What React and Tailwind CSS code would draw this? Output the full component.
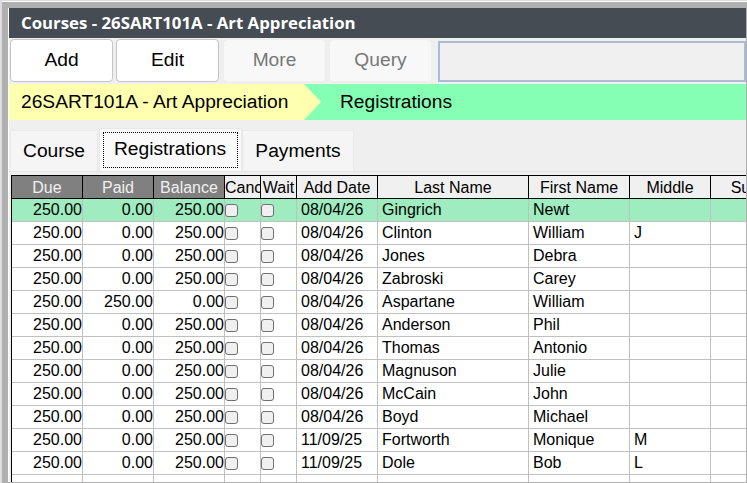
const rows = [
  ["250.00", "0.00", "250.00", "08/04/26", "Gingrich", "Newt", ""],
  ["250.00", "0.00", "250.00", "08/04/26", "Clinton", "William", "J"],
  ["250.00", "0.00", "250.00", "08/04/26", "Jones", "Debra", ""],
  ["250.00", "0.00", "250.00", "08/04/26", "Zabroski", "Carey", ""],
  ["250.00", "250.00", "0.00", "08/04/26", "Aspartane", "William", ""],
  ["250.00", "0.00", "250.00", "08/04/26", "Anderson", "Phil", ""],
  ["250.00", "0.00", "250.00", "08/04/26", "Thomas", "Antonio", ""],
  ["250.00", "0.00", "250.00", "08/04/26", "Magnuson", "Julie", ""],
  ["250.00", "0.00", "250.00", "08/04/26", "McCain", "John", ""],
  ["250.00", "0.00", "250.00", "08/04/26", "Boyd", "Michael", ""],
  ["250.00", "0.00", "250.00", "11/09/25", "Fortworth", "Monique", "M"],
  ["250.00", "0.00", "250.00", "11/09/25", "Dole", "Bob", "L"],
  ["", "", "", "", "", "", ""],
];

const darkHead = "h-[24px] border-r border-b border-t border-black bg-[#808080] p-0 pt-px text-center font-normal leading-none text-[#f0f0f0]";
const lightHead = "h-[24px] border-r border-b border-t border-black bg-[#f0f0f0] p-0 pt-px text-center font-normal leading-none text-black";
const cell = "h-[23px] border-r border-b border-[#c0c0c0] p-0 leading-none whitespace-nowrap overflow-hidden";

function ActionButton({ label, disabled }) {
  return (
    <button
      className={
        disabled
          ? "h-[43px] w-[103px] rounded border border-[#eeeeee] bg-[#f8f8f8] text-[19.2px] text-[#777777]"
          : "h-[43px] w-[103px] rounded border border-[#c4c4cc] bg-white text-[19.2px] text-black"
      }
    >
      {label}
    </button>
  );
}

function Box() {
  return (
    <input
      type="checkbox"
      readOnly
      checked={false}
      className="m-0 block h-[13px] w-[13px] appearance-none rounded-[3px] border border-[#707070] bg-[#f0f0f0]"
    />
  );
}

export default function App() {
  return (
    <div
      className="h-[483px] w-[747px] overflow-hidden border-l-2 border-t border-[#dddddd] bg-[#efefef]"
      style={{ fontFamily: '"Liberation Sans", Arial, sans-serif' }}
    >
      <div className="h-full border-t border-white">
        <div className="h-full overflow-hidden border-l-[6px] border-r border-t-[6px] border-b border-[#b0b0b0]">
          <div className="h-full border-l border-white">
            <div
              className="flex h-[30px] items-center bg-[#454c54] pl-3 text-[16.8px] font-bold text-white"
              style={{ fontFamily: '"Open Sans", sans-serif' }}
            >
              Courses - 26SART101A - Art Appreciation
            </div>

            <div className="mt-px flex pl-px">
              <ActionButton label="Add" />
              <div className="w-[3px]" />
              <ActionButton label="Edit" />
              <div className="w-[4px]" />
              <ActionButton label="More" disabled />
              <div className="w-[3px]" />
              <ActionButton label="Query" disabled />
              <div className="mt-[2px] ml-[6px] h-[41px] flex-1 border-2 border-[#a9bcd4] bg-[#f0f0f0]" />
            </div>

            <div className="relative mt-[2px] flex h-[36px] items-center bg-[#84ffb4] text-[19.2px] text-black">
              <div className="flex h-full w-[295px] items-center bg-[#ffffb0] pl-3">26SART101A - Art Appreciation</div>
              <svg className="h-[36px] w-[17px]" viewBox="0 0 17 36">
                <path d="M0 0 L17 18 L0 36 Z" fill="#ffffb0" />
              </svg>
              <span className="ml-[19px]">Registrations</span>
            </div>

            <div className="mt-[8px] flex h-[44px] items-end border-b border-[#e4e4e4] pl-px text-[19.2px] text-black">
              <div className="flex h-[41px] w-[88px] items-center justify-center border border-b-0 border-[#eaeaea] bg-[#f5f5f5]">
                Course
              </div>
              <div className="ml-px flex h-[43px] w-[143px] items-center justify-center border border-b-0 border-[#e8e8e8] bg-[#fafafa] p-[3px]">
                <span className="flex h-full w-full items-center justify-center border border-dotted border-black pb-[1px] pr-px">
                  Registrations
                </span>
              </div>
              <div className="flex h-[41px] w-[112px] items-center justify-center border border-b-0 border-[#eaeaea] bg-[#f5f5f5]">
                Payments
              </div>
            </div>

            <div className="mt-[3px] ml-[2px] overflow-hidden">
              <table className="w-[780px] table-fixed border-separate border-spacing-0 border-l border-black bg-white text-[16px] text-black">
                <colgroup>
                  <col className="w-[71px]" />
                  <col className="w-[71px]" />
                  <col className="w-[71px]" />
                  <col className="w-[36px]" />
                  <col className="w-[36px]" />
                  <col className="w-[81px]" />
                  <col className="w-[151px]" />
                  <col className="w-[101px]" />
                  <col className="w-[81px]" />
                  <col className="w-[80px]" />
                </colgroup>
                <thead>
                  <tr>
                    <th className={darkHead}>Due</th>
                    <th className={darkHead}>Paid</th>
                    <th className={darkHead}>Balance</th>
                    <th className={lightHead + " overflow-hidden whitespace-nowrap text-left"}>Cancel</th>
                    <th className={lightHead + " overflow-hidden"}>Wait</th>
                    <th className={lightHead}>Add Date</th>
                    <th className={lightHead}>Last Name</th>
                    <th className={lightHead}>First Name</th>
                    <th className={lightHead}>Middle</th>
                    <th className={lightHead}>Suffix</th>
                  </tr>
                </thead>
                <tbody>
                  {rows.map((r, i) => (
                    <tr key={i} className={i === 0 ? "bg-[#9eecbf]" : "bg-white"}>
                      <td className={cell + " text-right"}>{r[0]}</td>
                      <td className={cell + " text-right"}>{r[1]}</td>
                      <td className={cell + " text-right"}>{r[2]}</td>
                      <td className={cell}>{r[0] && <Box />}</td>
                      <td className={cell}>{r[0] && <Box />}</td>
                      <td className={cell + " pl-1"}>{r[3]}</td>
                      <td className={cell + " pl-1"}>{r[4]}</td>
                      <td className={cell + " pl-1"}>{r[5]}</td>
                      <td className={cell + " pl-1"}>{r[6]}</td>
                      <td className={cell}></td>
                    </tr>
                  ))}
                </tbody>
              </table>
            </div>
          </div>
        </div>
      </div>
    </div>
  );
}
